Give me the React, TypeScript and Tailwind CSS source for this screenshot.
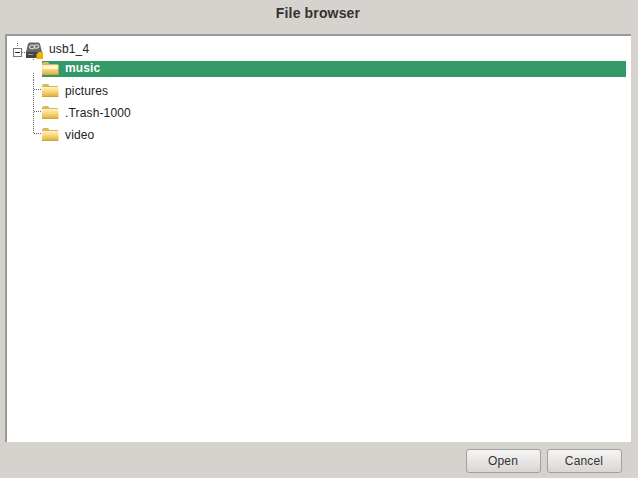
const font = { fontFamily: '"Liberation Sans", Arial, sans-serif' }

function Folder({ open }: { open?: boolean }) {
  return (
    <svg width="17" height="16" viewBox="0 0 17 16" className="shrink-0">
      <defs>
        <linearGradient id="fold" x1="0" y1="0" x2="0" y2="1">
          <stop offset="0" stopColor="#fff3c0" />
          <stop offset="0.5" stopColor="#f5d87c" />
          <stop offset="1" stopColor="#e2b344" />
        </linearGradient>
      </defs>
      <path d="M0 3 L1 1 H6 L7.5 3 H16 V5 H0 Z" fill="#dcb65c" />
      <rect x="0" y="4" width="16.5" height="9" fill="url(#fold)" />
      <path d="M0 13.5 H16.5" stroke="#d4a236" />
      {open && <path d="M2.5 5 H16.5 L14.5 8 H0.5 Z" fill="#fff8d8" />}
    </svg>
  )
}

function Drive() {
  return (
    <svg width="17" height="17" viewBox="0 0 17 17" className="shrink-0">
      <path d="M3.5 0.5 H12.5 Q13.5 0.5 14 2 L16 10 H0 L2 2 Q2.5 0.5 3.5 0.5 Z" fill="#666" />
      <ellipse cx="6" cy="5" rx="2.4" ry="1.8" fill="none" stroke="#cfcfcf" strokeWidth="1.3" />
      <ellipse cx="10.5" cy="4.5" rx="2.2" ry="1.7" fill="none" stroke="#cfcfcf" strokeWidth="1.3" />
      <rect x="0" y="10" width="15" height="6" fill="#444" />
      <rect x="2" y="12" width="5" height="1" fill="#999" />
      <path d="M10.5 17 V12.5 L12.5 10 H17 V17 Z" fill="#f0b400" />
    </svg>
  )
}

function Row({ name, selected, last }: { name: string; selected?: boolean; last?: boolean }) {
  const line = selected ? 'M0.5 1 V3' : last ? 'M0.5 0 V9.5 H10' : 'M0.5 0 V22 M0.5 9.5 H10'
  return (
    <div className={`flex items-center ${selected ? 'h-[16px]' : 'h-[22px]'}`}>
      {/* tree connector */}
      <svg width="10" height="22" viewBox="0 0 10 22" className="shrink-0 ml-[33px] overflow-visible">
        <path
          d={line}
          fill="none"
          stroke="#666"
          strokeDasharray="1 1"
          shapeRendering="crispEdges"
        />
        {name === 'pictures' && (
          <path d="M0.5 -7 V0" fill="none" stroke="#666" strokeDasharray="1 1" shapeRendering="crispEdges" />
        )}
      </svg>
      <div className={`flex flex-1 items-center h-[16px] mr-[5px] -ml-[1px] ${selected ? 'bg-[#339966]' : ''}`}>
        <Folder open={selected} />
        <span
          className={`ml-[6px] self-start text-[12px] tracking-[0.15px] leading-[14px] ${selected ? 'font-bold text-white' : 'mt-[1px] text-[#222]'}`}
        >
          {name}
        </span>
      </div>
    </div>
  )
}

export default function App() {
  return (
    <div className="w-[638px] h-[478px] flex flex-col bg-[#d6d2ce] overflow-hidden" style={font}>
      <div className="h-[34px] pb-[7px] pr-[2px] flex items-center justify-center text-[14px] tracking-[0.15px] font-bold text-[#333]">
        File browser
      </div>
      <div className="ml-[5px] mr-[7px] h-[408px] bg-white border-t-2 border-l-2 border-[#9a9a9a] pt-[6px]">
        <div className="flex items-center h-[17px] -ml-[7px]">
          <svg width="19" height="17" viewBox="0 0 19 17" className="shrink-0 ml-[13px] overflow-visible">
            <path d="M4.5 1 V5 M9 10.5 H13" stroke="#666" strokeDasharray="1 1" fill="none" shapeRendering="crispEdges" />
            <rect x="0.5" y="6.5" width="8" height="8" fill="#fff" stroke="#777" />
            <path d="M2 10.5 H7" stroke="#222" />
          </svg>
          <div className="-ml-[6px]">
            <Drive />
          </div>
          <span className="ml-[6px] self-start leading-[14px] text-[12px] tracking-[0.15px] text-[#222]">usb1_4</span>
        </div>
        <div className="-ml-[7px] mt-[2px]">
          <Row name="music" selected />
          <div className="mt-[3px]">
            <Row name="pictures" />
            <Row name=".Trash-1000" />
            <Row name="video" last />
          </div>
        </div>
      </div>
      <div className="flex justify-end gap-[6px] pt-[7px] pr-[16px]">
        {['Open', 'Cancel'].map((label) => (
          <button
            key={label}
            className="w-[75px] h-[24px] rounded-[3px] border border-[#a3a09c] bg-gradient-to-b from-[#f6f5f4] to-[#d9d7d4] text-[12px] tracking-[0.15px] pr-[1px] text-[#333]"
          >
            {label}
          </button>
        ))}
      </div>
    </div>
  )
}
